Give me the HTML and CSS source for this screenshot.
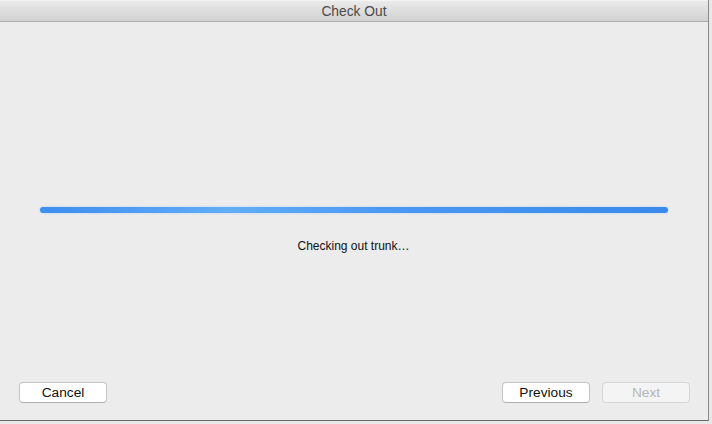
FILE: index.html
```html
<!DOCTYPE html>
<html>
<head>
<meta charset="utf-8">
<link rel="stylesheet" href="styles.css">
</head>
<body>
<div class="window">
  <div class="titlebar">Check Out</div>
  <div class="content">
    <div class="progress-area">
      <div class="track"><div class="bar"></div></div>
      <div class="status">Checking out trunk…</div>
    </div>
    <div class="buttons">
      <button class="btn">Cancel</button>
      <div class="right">
        <button class="btn">Previous</button>
        <button class="btn disabled">Next</button>
      </div>
    </div>
  </div>
</div>
</body>
</html>
```
FILE: styles.css
```css
html, body {
  margin: 0;
  padding: 0;
  background: #e8e8e8;
  width: 712px;
  height: 424px;
  overflow: hidden;
  font-family: "Liberation Sans", Arial, sans-serif;
}
.window {
  width: 708px;
  height: 420px;
  background: #ececec;
  border-right: 1px solid #8a8a8a;
  border-bottom: 1px solid #6a6a6a;
  display: flex;
  flex-direction: column;
}
.titlebar {
  height: 22px;
  box-sizing: border-box;
  background: linear-gradient(#ebeaeb, #d3d2d3);
  border-top: 1px solid #f4f4f4;
  border-bottom: 1px solid #aeaeae;
  text-align: center;
  font-size: 13.8px;
  line-height: 21px;
  color: #4a4a4a;
}
.content {
  flex: 1;
  display: flex;
  flex-direction: column;
}
.progress-area {
  padding: 185px 40px 0 40px;
  flex: 1;
}
.track {
  height: 6px;
  border-radius: 3px;
  background: #dfe6ee;
}
.bar {
  height: 6px;
  border-radius: 3px;
  background: linear-gradient(90deg, #3c8ef0 0%, #63adf6 30%, #4a99f2 55%, #3a8aec 100%);
  box-shadow: 0 0 2px rgba(120,170,240,0.6);
}
.status {
  text-align: center;
  font-size: 12px;
  color: #111;
  margin-top: 26px;
  padding-right: 1px;
}
.buttons {
  display: flex;
  justify-content: space-between;
  padding: 0 18px 17px 19px;
}
.right {
  display: flex;
  gap: 12px;
}
.btn {
  width: 88px;
  height: 21px;
  box-sizing: border-box;
  background: #fff;
  border: 1px solid #c4c4c4;
  border-bottom-color: #b0b0b0;
  border-radius: 4px;
  font-family: "Liberation Sans", Arial, sans-serif;
  font-size: 13.7px;
  color: #111;
  padding: 0;
  line-height: 19px;
}
.btn.disabled {
  background: #f4f4f4;
  color: #b5b5b5;
  border-color: #d6d6d6;
}
```
